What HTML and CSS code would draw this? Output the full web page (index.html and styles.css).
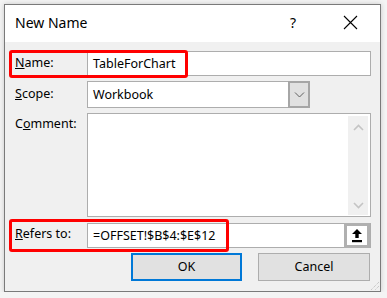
FILE: index.html
```html
<!DOCTYPE html>
<html lang="en">
<head>
  <meta charset="UTF-8" />
  <title>New Name</title>
  <link rel="stylesheet" href="styles.css">
</head>
<body>
  <div class="window">
    <div class="titlebar">
      <span class="title">New Name</span>
      <span class="help">?</span>
      <span class="close">
        <svg width="15" height="15" viewBox="0 0 15 15"><path d="M1 1 L14 14 M14 1 L1 14" stroke="#000" stroke-width="1.1" fill="none"/></svg>
      </span>
    </div>

    <div class="body">
      <div class="row row-name">
        <div class="label"><u>N</u>ame:</div>
        <div class="field textbox">TableForChart</div>
      </div>

      <div class="row row-scope">
        <div class="label"><u>S</u>cope:</div>
        <div class="field combo">
          <span class="combo-text">Workbook</span>
          <span class="combo-btn">
            <svg width="11" height="6" viewBox="0 0 11 6"><path d="M1 0.5 L5.5 5 L10 0.5" stroke="#606060" stroke-width="1" fill="none"/></svg>
          </span>
        </div>
      </div>

      <div class="row row-comment">
        <div class="label">C<u>o</u>mment:</div>
        <div class="field textarea">
          <div class="scrollbar">
            <svg width="11" height="7" viewBox="0 0 11 7"><path d="M1 6 L5.5 1.5 L10 6" stroke="#c4c4c4" stroke-width="1.6" fill="none"/></svg>
            <svg width="11" height="7" viewBox="0 0 11 7"><path d="M1 1 L5.5 5.5 L10 1" stroke="#c4c4c4" stroke-width="1.6" fill="none"/></svg>
          </div>
        </div>
      </div>

      <div class="row row-refers">
        <div class="label"><u>R</u>efers to:</div>
        <div class="field textbox refers">
          <span>=OFFSET!$B$4:$E$12</span>
          <span class="collapse-btn">
            <svg width="10" height="14" viewBox="0 0 10 14"><path d="M5 0 L10 5 L6.7 5 L6.7 9 L3.3 9 L3.3 5 L0 5 Z" fill="#000"/><rect x="0" y="11" width="10" height="2.2" fill="#000"/></svg>
          </span>
        </div>
      </div>

      <div class="buttons">
        <div class="btn btn-default">OK</div>
        <div class="btn">Cancel</div>
      </div>

      <div class="mark mark-name"></div>
      <div class="mark mark-refers"></div>

      <svg class="grip" width="12" height="12" viewBox="0 0 12 12">
        <path d="M11 3 L3 11 M11 7 L7 11 M11 11 L11 11" stroke="#b8b8b8" stroke-width="1" stroke-dasharray="1 1" fill="none"/>
      </svg>
    </div>
  </div>
</body>
</html>
```

FILE: styles.css
```css
*, *::before, *::after {
  margin: 0;
  padding: 0;
  box-sizing: border-box;
}

body {
  background: #f4f4f4;
  font-family: "Noto Sans", "Open Sans", sans-serif;
  font-size: 12.5px;
  color: #000;
  padding: 4px 0 0 4px;
}

.window {
  width: 377px;
  height: 288px;
  border: 1px solid #7a7a7a;
  background: #f0f0f0;
  box-shadow: 0 0 5px rgba(0, 0, 0, 0.18);
  display: flex;
  flex-direction: column;
}

/* Title bar */
.titlebar {
  height: 37px;
  background: #fff;
  display: flex;
  align-items: center;
  padding-left: 10px;
}

.title {
  font-size: 14px;
  flex: 1;
  padding-bottom: 2px;
}

.help {
  font-size: 14px;
  width: 10px;
  margin-right: 43px;
  padding-bottom: 2px;
}

.close {
  width: 37px;
  display: flex;
  padding-bottom: 2px;
}

/* Body */
.body {
  position: relative;
  flex: 1;
  padding: 9px 9px 0 10px;
  display: flex;
  flex-direction: column;
}

.row {
  display: flex;
}

.label {
  width: 72px;
  flex-shrink: 0;
}

.field {
  flex: 1;
  background: #fff;
  border: 1px solid #adadad;
}

.row-name .field {
  height: 25px;
}

.row-name .label {
  padding-top: 3px;
}

.textbox {
  display: flex;
  align-items: center;
  padding-left: 5px;
  padding-bottom: 1px;
}

.row-scope {
  margin-top: 5px;
}

.row-scope .label {
  padding-top: 4px;
}

.combo {
  flex: 0 0 223px;
  height: 27px;
  display: flex;
  align-items: center;
  padding-left: 5px;
}

.combo-text {
  flex: 1;
}

.combo-btn {
  width: 22px;
  height: 27px;
  margin: -1px -1px -1px 0;
  border: 2px solid #a6a6a6;
  background: #e1e1e1;
  display: flex;
  align-items: center;
  justify-content: center;
}

.row-comment {
  margin-top: 5px;
}

.row-comment .label {
  padding-top: 2px;
}

.textarea {
  height: 104px;
  display: flex;
  justify-content: flex-end;
  padding: 2px 2px 1px 0;
}

.scrollbar {
  width: 20px;
  background: #f0f0f0;
  display: flex;
  flex-direction: column;
  justify-content: space-between;
  align-items: center;
  padding: 8px 0 6px;
}

.row-refers {
  margin-top: 6px;
}

.row-refers .label {
  padding-top: 2px;
}

.refers {
  height: 25px;
  justify-content: space-between;
  padding-bottom: 0;
}

.collapse-btn {
  width: 26px;
  height: 25px;
  margin: -1px 0 -1px 0;
  border: 3px solid #b0b0b0;
  background: #fff;
  display: flex;
  align-items: center;
  justify-content: center;
}

/* Buttons */
.buttons {
  margin-top: 5px;
  display: flex;
  justify-content: flex-end;
  gap: 16px;
  padding-right: 1px;
}

.btn {
  width: 112px;
  height: 28px;
  background: #e1e1e1;
  border: 1px solid #adadad;
  display: flex;
  align-items: center;
  justify-content: center;
  padding-bottom: 1px;
}

.btn-default {
  width: 111px;
  border: 2px solid #0078d7;
}

/* Red highlight marks */
.mark {
  position: absolute;
  border: 3px solid #ff0000;
  border-radius: 3px;
}

.mark-name {
  left: 4px;
  top: 8px;
  width: 179px;
  height: 28px;
}

.mark-refers {
  left: 4px;
  top: 177px;
  width: 220px;
  height: 33px;
}

.grip {
  position: absolute;
  right: 0;
  bottom: 0;
}
```
